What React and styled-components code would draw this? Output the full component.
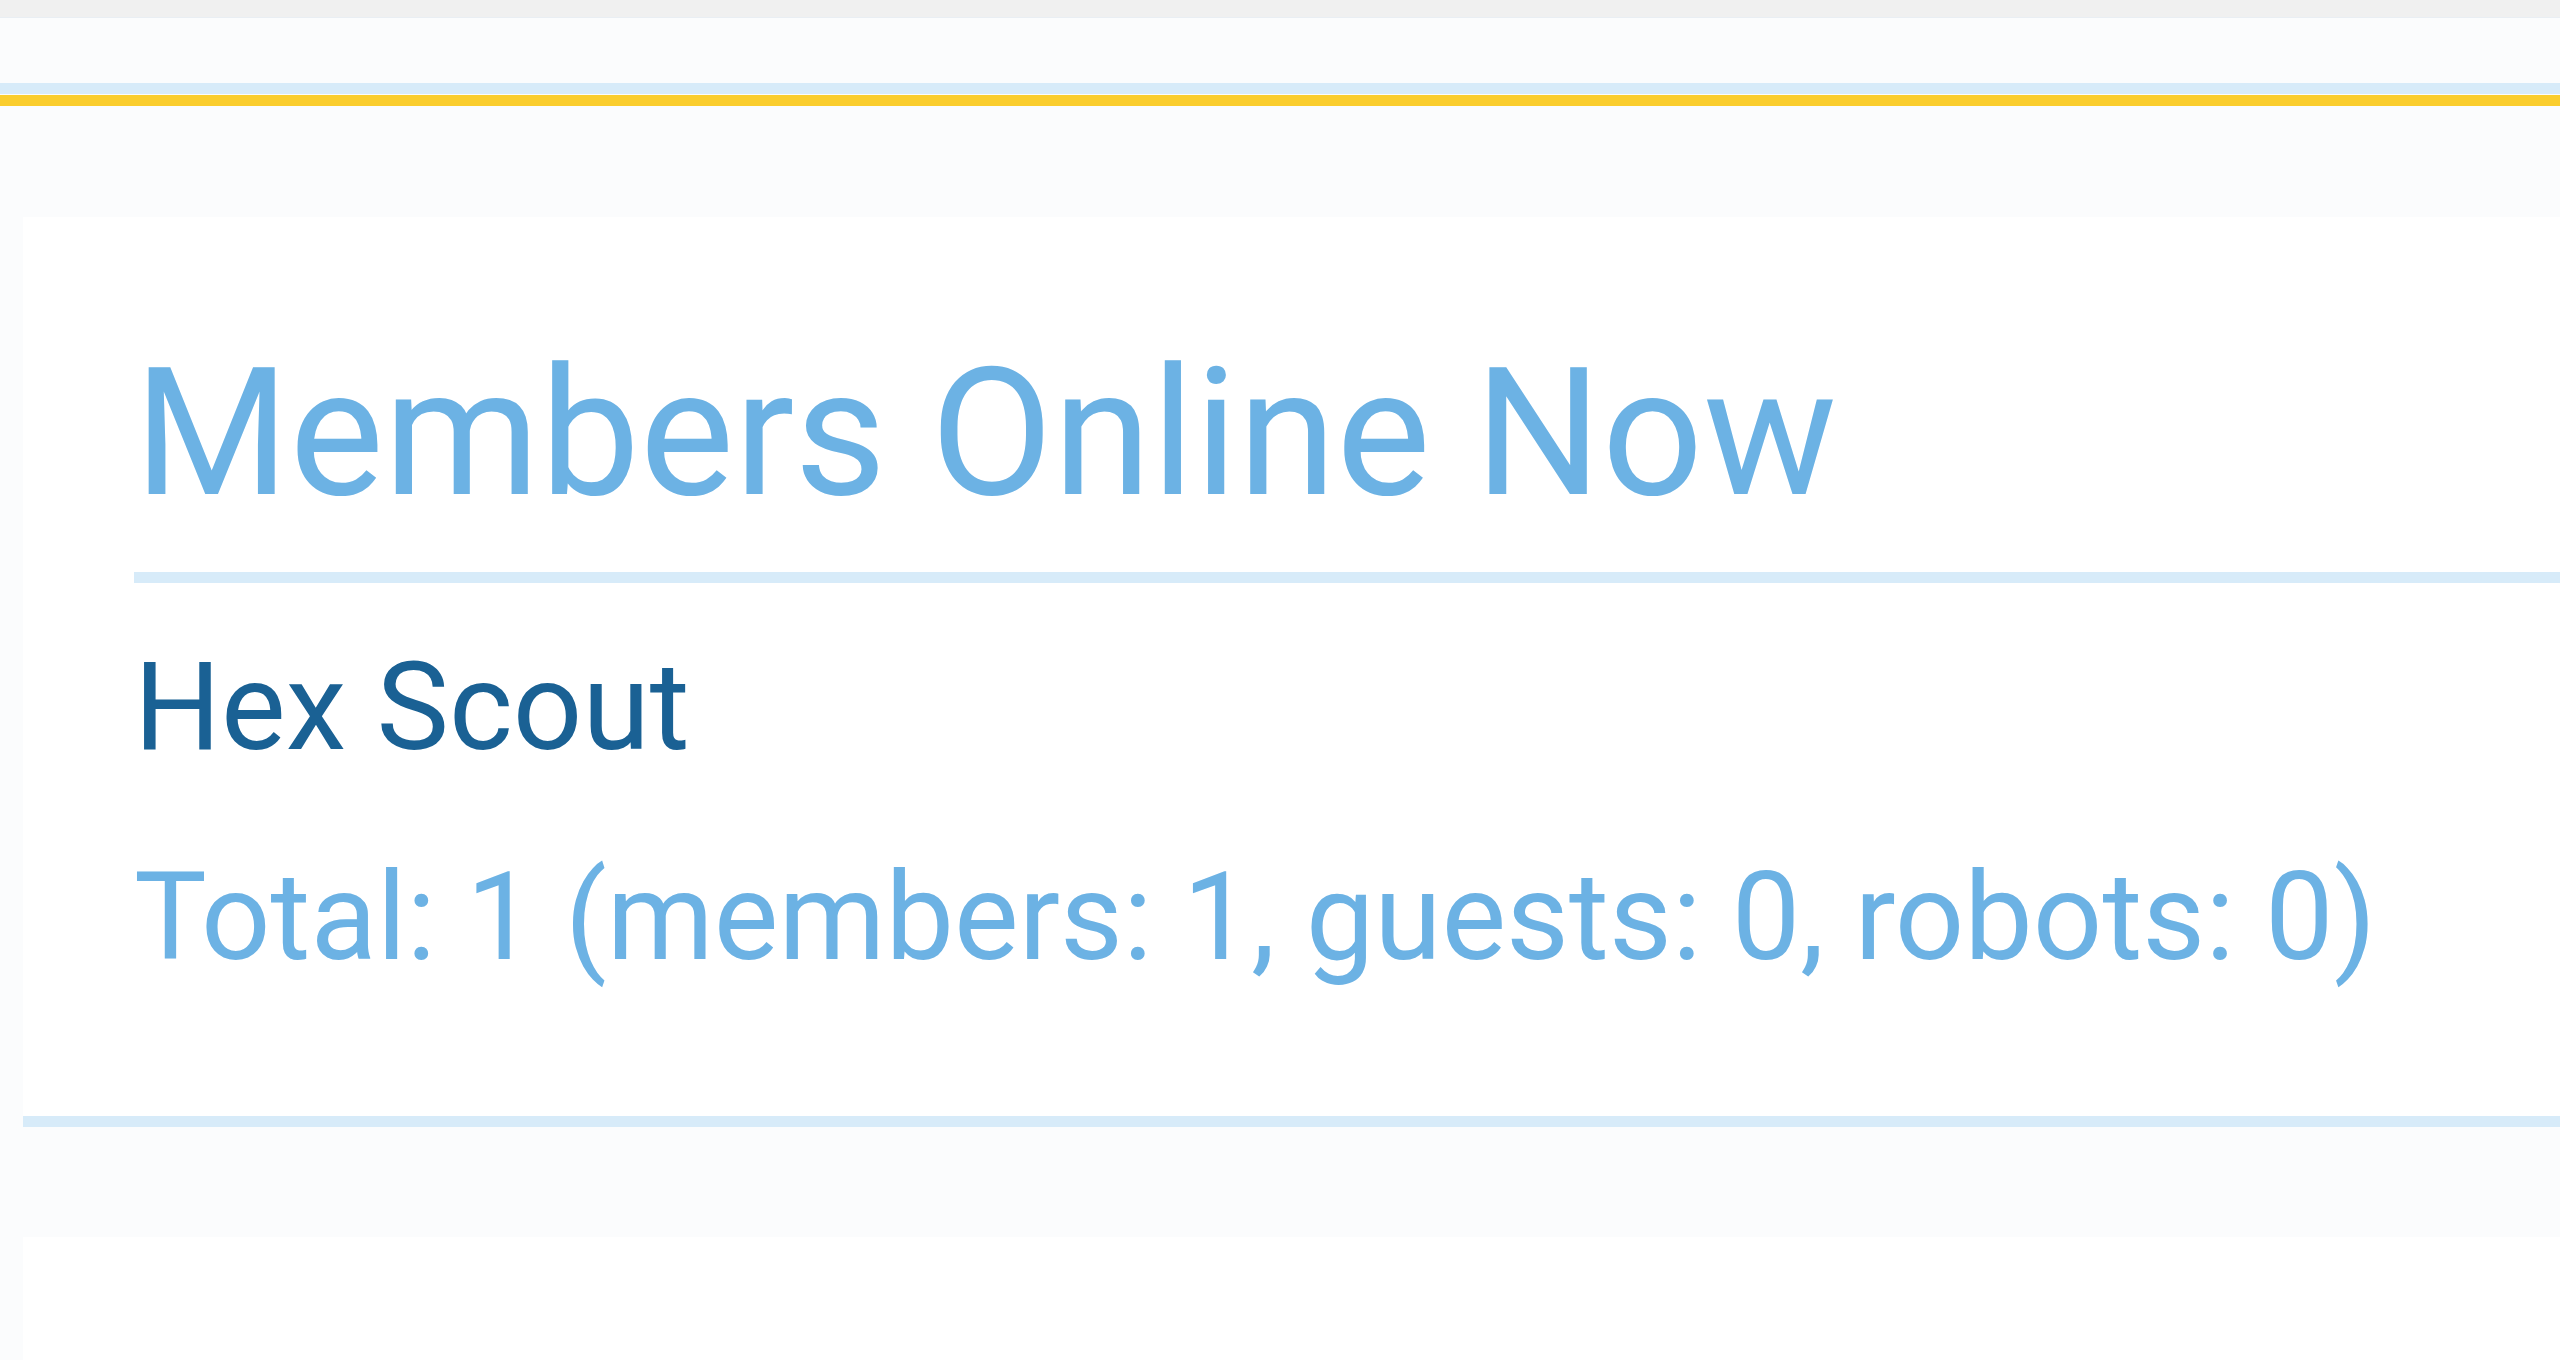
import React from "react";
import styled, { createGlobalStyle } from "styled-components";

const GlobalStyle = createGlobalStyle`
  html, body {
    margin: 0;
    padding: 0;
    background: #fbfcfd;
    font-family: Roboto, "Liberation Sans", Arial, sans-serif;
  }
  * { box-sizing: border-box; }
`;

const TopBar = styled.div`
  height: 18px;
  background: #f0f0f0;
  border-bottom: 1px solid #e9eef3;
`;

const Header = styled.header`
  height: 76px;
  background: #fbfcfd;
  border-bottom: 11px solid #d7ebf9;
`;

const Stripe = styled.div`
  margin-top: 1px;
  height: 11px;
  background: #facd2e;
`;

const Main = styled.main`
  padding: 111px 0 0 23px;
`;

const Card = styled.section`
  background: #ffffff;
  padding: 108px 0 124px 111px;
  border-bottom: 11px solid #d7ebf9;
`;

const Heading = styled.h2`
  margin: 0;
  font-size: 178px;
  line-height: 217px;
  font-weight: 400;
  color: #6cb2e4;
  padding-bottom: 30px;
  border-bottom: 11px solid #d7ebf9;
  white-space: nowrap;
`;

const Line = styled.div`
  margin-top: ${(p) => p.$gap}px;
  font-size: 122px;
  line-height: 148px;
  color: ${(p) => (p.$dark ? "#1a6194" : "#6cb2e4")};
  white-space: nowrap;
`;

const NextCard = styled.section`
  margin-top: 110px;
  background: #ffffff;
  height: 124px;
`;

export default function App() {
  return (
    <>
      <GlobalStyle />
      <TopBar />
      <Header />
      <Stripe />
      <Main>
        <Card>
          <Heading>Members Online Now</Heading>
          <Line $dark $gap={51}>Hex Scout</Line>
          <Line $gap={62}>Total: 1 (members: 1, guests: 0, robots: 0)</Line>
        </Card>
        <NextCard />
      </Main>
    </>
  );
}
